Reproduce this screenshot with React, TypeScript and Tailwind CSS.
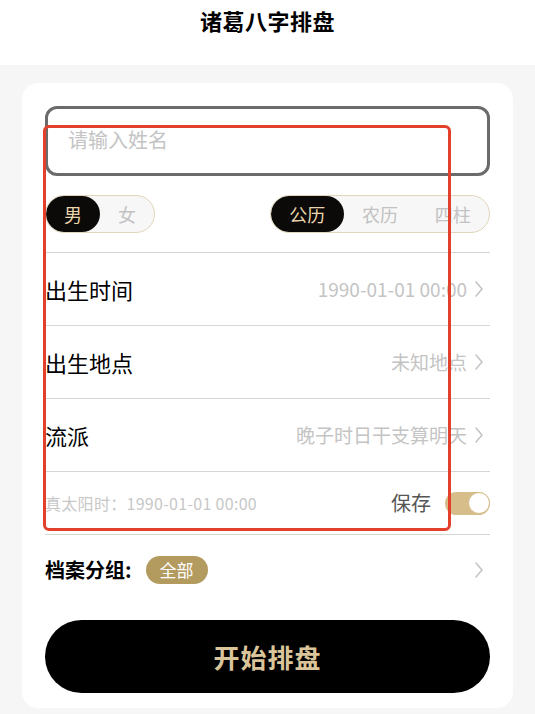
import { useState } from "react";

const font = { fontFamily: '"Noto Sans CJK SC", "Noto Sans", sans-serif' };

const Chevron = () => (
  <svg width="12" height="18" viewBox="0 0 12 18" className="ml-[6px] mr-[5px] shrink-0">
    <polyline points="3,2 9,9 3,16" fill="none" stroke="#c4c4c4" strokeWidth="1.6" strokeLinecap="round" strokeLinejoin="round" />
  </svg>
);

const rows = [
  { label: "出生时间", value: "1990-01-01 00:00" },
  { label: "出生地点", value: "未知地点" },
  { label: "流派", value: "晚子时日干支算明天" },
];

export default function App() {
  const [gender, setGender] = useState("男");
  const [calendar, setCalendar] = useState("公历");
  const [save, setSave] = useState(true);

  return (
    <div className="relative min-h-screen bg-[#f6f6f6]" style={font}>
      {/* Header */}
      <div className="h-[65px] bg-white flex justify-center pt-[6px]">
        <h1 className="text-[22px] leading-[28px] font-bold text-black tracking-[0.5px]">诸葛八字排盘</h1>
      </div>

      {/* Card */}
      <div className="mx-[22px] mt-[18px] bg-white rounded-[16px] px-[23px] pt-[23px] pb-[15px]">
        <div className="h-[70px] border-[3px] border-[#6b6b6b] rounded-[12px] flex items-center px-[20px]">
          <input
            placeholder="请输入姓名"
            className="w-full text-[20px] outline-none placeholder:text-[#c4c4c4] mt-[-3px]"
          />
        </div>

        <div className="flex justify-between mt-[19px] mb-[19px]">
          <div className="grid grid-cols-2 w-[110px] h-[38px] rounded-full border border-[#e2d5bb] bg-[#f7f7f7] overflow-hidden">
            {["男", "女"].map((g) => (
              <button
                key={g}
                onClick={() => setGender(g)}
                className={`text-[18px] rounded-full ${gender === g ? "bg-[#0c0a08] text-[#ead6ab]" : "text-[#c2c2c2]"}`}
              >
                {g}
              </button>
            ))}
          </div>
          <div className="grid grid-cols-3 w-[220px] h-[38px] rounded-full border border-[#e2d5bb] bg-[#f7f7f7] overflow-hidden">
            {["公历", "农历", "四柱"].map((c) => (
              <button
                key={c}
                onClick={() => setCalendar(c)}
                className={`text-[18px] rounded-full ${calendar === c ? "bg-[#0c0a08] text-[#ead6ab]" : "text-[#c2c2c2]"}`}
              >
                {c}
              </button>
            ))}
          </div>
        </div>

        {rows.map((r) => (
          <div key={r.label} className="h-[73px] border-t border-[#d6d6d6] flex items-center justify-between">
            <span className="text-[22px] text-black">{r.label}</span>
            <span className="flex items-center text-[19px] text-[#c4c4c4]">
              {r.value}
              <Chevron />
            </span>
          </div>
        ))}

        <div className="h-[64px] border-t border-b border-[#d6d6d6] flex items-center justify-between">
          <span className="text-[16px] text-[#c8c8c8] tracking-[0.3px]">真太阳时：1990-01-01 00:00</span>
          <div className="flex items-center gap-[14px]">
            <span className="text-[20px] text-[#555555]">保存</span>
            <button
              onClick={() => setSave(!save)}
              className={`w-[45px] h-[23px] rounded-full flex items-center ${save ? "bg-[#d6bd89] justify-end" : "bg-[#e2e2e2] justify-start"}`}
            >
              <span className="w-[22px] h-[22px] rounded-full bg-white border border-[#d6bd89]" />
            </button>
          </div>
        </div>

        <div className="h-[70px] flex items-center justify-between">
          <div className="flex items-center gap-[14px]">
            <span className="text-[20px] font-bold text-black">档案分组:</span>
            <span className="h-[28px] px-[14px] rounded-full bg-[#b39a5f] text-white text-[17px] flex items-center">全部</span>
          </div>
          <Chevron />
        </div>

        <button className="mt-[15px] w-full h-[73px] rounded-full bg-black text-[#dac49a] text-[26px] font-bold tracking-[1px]">
          开始排盘
        </button>
      </div>

      {/* Annotation overlay */}
      <div className="absolute left-[43px] top-[125px] w-[408px] h-[406px] border-[3px] border-[#e2402b] rounded-[6px] pointer-events-none" />
    </div>
  );
}
